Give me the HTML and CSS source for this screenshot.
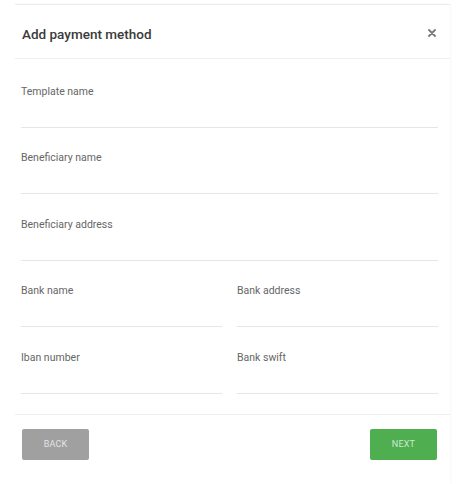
FILE: index.html
```html
<!DOCTYPE html>
<html lang="en">
<head>
    <meta charset="UTF-8">
    <meta name="viewport" content="width=device-width, initial-scale=1.0">
    <title>Add payment method</title>
    <link rel="stylesheet" href="styles.css">
</head>
<body>
    <div class="modal">
        <div class="modal-header">
            <h2 class="modal-title">Add payment method</h2>
            <button class="close-btn" aria-label="Close">
                <svg width="8" height="8" viewBox="0 0 8 8">
                    <path d="M1 1 L7 7 M7 1 L1 7" stroke="#7a7a7a" stroke-width="1.8" stroke-linecap="round"/>
                </svg>
            </button>
        </div>

        <form class="modal-body">
            <div class="field">
                <label for="templateName">Template name</label>
                <input type="text" id="templateName">
            </div>
            <div class="field">
                <label for="beneficiaryName">Beneficiary name</label>
                <input type="text" id="beneficiaryName">
            </div>
            <div class="field">
                <label for="beneficiaryAddress">Beneficiary address</label>
                <input type="text" id="beneficiaryAddress">
            </div>
            <div class="field-row">
                <div class="field">
                    <label for="bankName">Bank name</label>
                    <input type="text" id="bankName">
                </div>
                <div class="field">
                    <label for="bankAddress">Bank address</label>
                    <input type="text" id="bankAddress">
                </div>
            </div>
            <div class="field-row">
                <div class="field">
                    <label for="iban">Iban number</label>
                    <input type="text" id="iban">
                </div>
                <div class="field">
                    <label for="swift">Bank swift</label>
                    <input type="text" id="swift">
                </div>
            </div>
        </form>

        <div class="modal-footer">
            <button class="btn btn-back">BACK</button>
            <button class="btn btn-next">NEXT</button>
        </div>
    </div>
</body>
</html>
```

FILE: styles.css
```css
* {
    margin: 0;
    padding: 0;
    box-sizing: border-box;
    font-family: Roboto, "Liberation Sans", sans-serif;
}

body {
    background: white;
}

.modal {
    margin: 4px 17px 0 15px;
    background: white;
    border-top: 1px solid #ececec;
    box-shadow: 1px 0 2px rgba(0, 0, 0, 0.04);
}

.modal-header {
    display: flex;
    justify-content: space-between;
    align-items: center;
    height: 54px;
    padding: 0 14px 0 7px;
    border-bottom: 1px solid #efefef;
}

.modal-title {
    font-size: 13.5px;
    font-weight: 500;
    color: #3a3a3a;
    margin-top: 4px;
}

.close-btn {
    background: none;
    border: none;
    display: flex;
    cursor: pointer;
    margin-top: 2px;
}

.modal-body {
    padding: 2px 12px 20px 6px;
}

.field {
    display: flex;
    flex-direction: column;
    padding-top: 23.5px;
    flex: 1;
}

.field label {
    font-size: 10.5px;
    line-height: 14px;
    color: #666;
}

.field input {
    height: 29px;
    border: none;
    border-bottom: 1px solid #e6e6e6;
    font-size: 13px;
    outline: none;
}

.field-row {
    display: flex;
    gap: 15px;
}

.modal-footer {
    display: flex;
    justify-content: space-between;
    padding: 14px 13px 24px 7px;
    border-top: 1px solid #efefef;
}

.btn {
    width: 67px;
    height: 31px;
    border: none;
    border-radius: 2px;
    font-size: 9px;
    letter-spacing: 0.2px;
    cursor: pointer;
}

.btn-back {
    background: #a0a0a0;
    color: #e4e4e4;
}

.btn-next {
    background: #4fae50;
    color: #cfe9cf;
}
```
